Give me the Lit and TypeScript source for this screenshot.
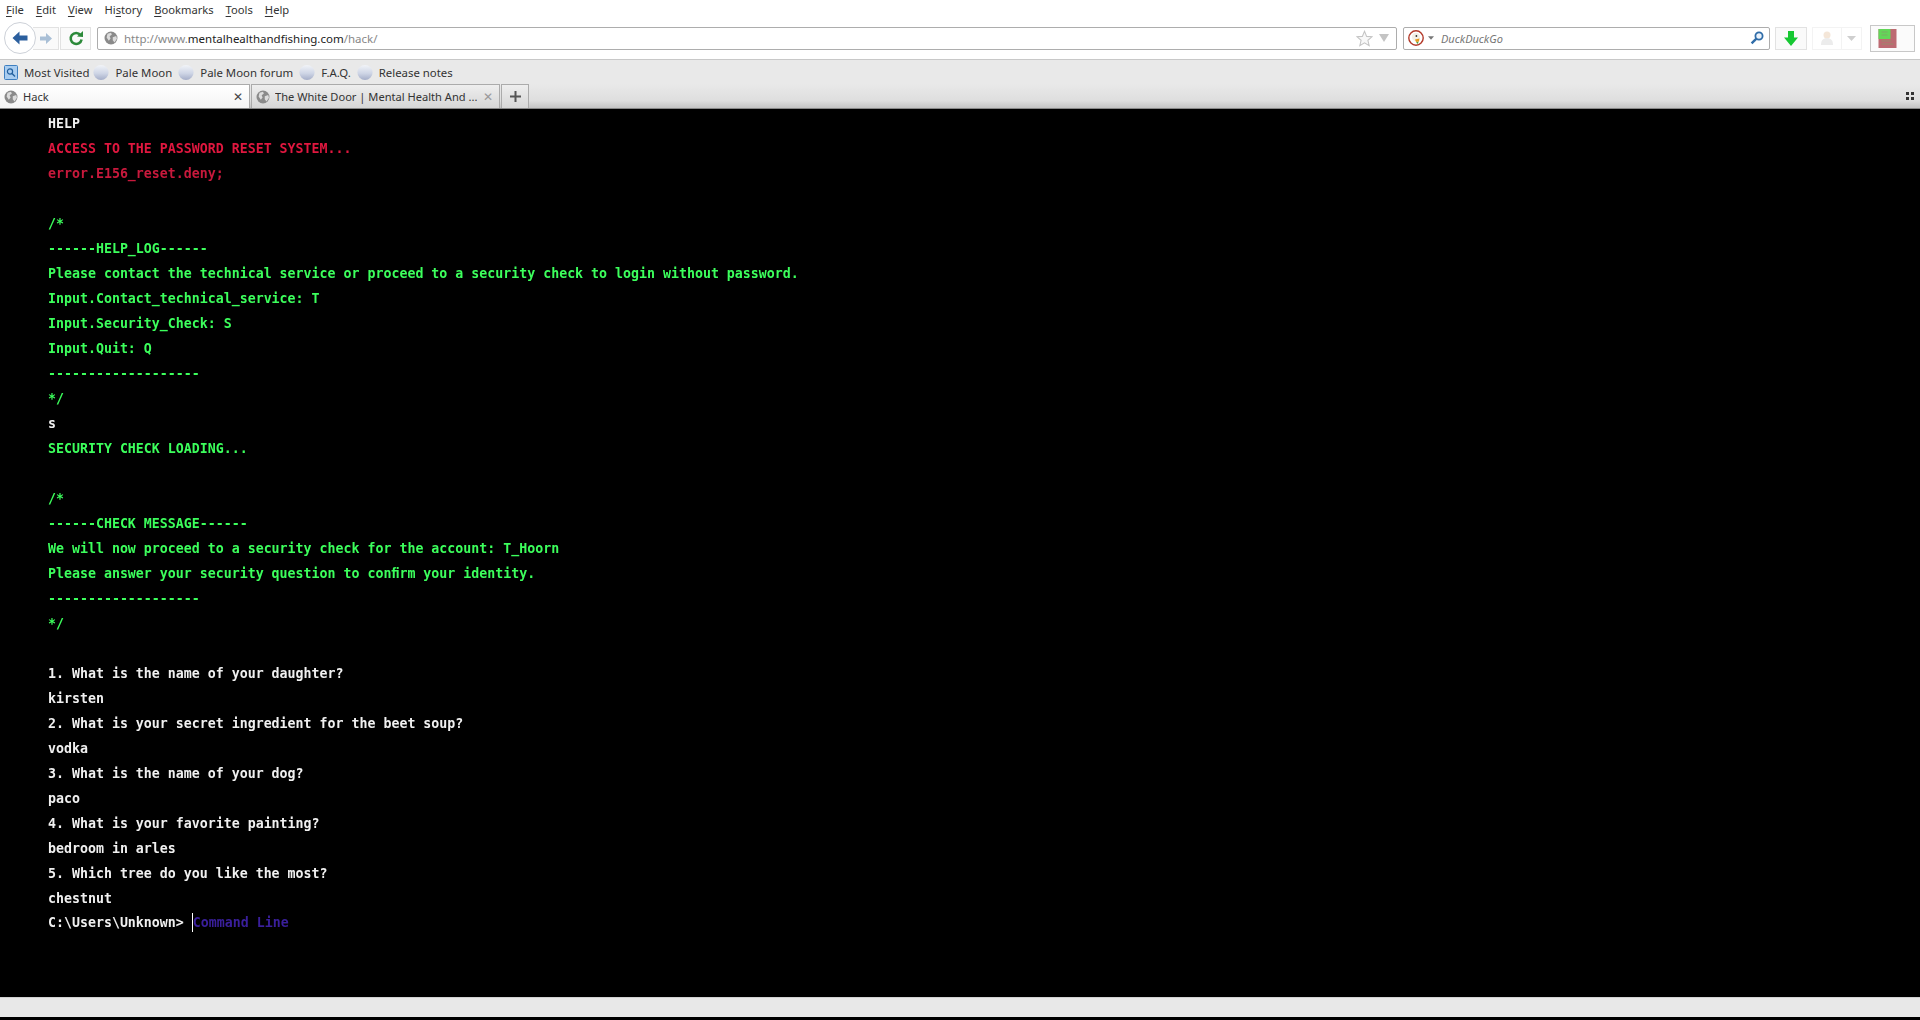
import { LitElement, html, css } from "lit";
import { customElement } from "lit/decorators.js";

const globe = (s = 16) => html`<svg class="ico" width=${s} height=${s} viewBox="0 0 16 16"><circle cx="8" cy="8" r="7.4" fill="#8a8a8a"/><path d="M4 3.2 8 2 9 4 6.5 6 7.5 8.5 5.5 11 3 7.5ZM10 7l4-1.2.8 3L12 13l-2-2.5Z" fill="#dcdcdc"/></svg>`;
const moon = html`<svg class="ico" width="16" height="17" viewBox="0 0 16 17"><defs><linearGradient id="m" x1="0" y1="0" x2="0" y2="1"><stop offset="0" stop-color="#f2f4f8"/><stop offset=".55" stop-color="#cfd6e6"/><stop offset="1" stop-color="#a4adc8"/></linearGradient></defs><circle cx="8" cy="8.5" r="7.6" fill="url(#m)"/></svg>`;

type Line = [string, string];
const L: Line[] = [
  ["w", "HELP"],
  ["r", "ACCESS TO THE PASSWORD RESET SYSTEM..."],
  ["d", "error.E156_reset.deny;"],
  ["g", ""],
  ["g", "/*"],
  ["g", "------HELP_LOG------"],
  ["g", "Please contact the technical service or proceed to a security check to login without password."],
  ["g", "Input.Contact_technical_service: T"],
  ["g", "Input.Security_Check: S"],
  ["g", "Input.Quit: Q"],
  ["g", "-------------------"],
  ["g", "*/"],
  ["w", "s"],
  ["g", "SECURITY CHECK LOADING..."],
  ["g", ""],
  ["g", "/*"],
  ["g", "------CHECK MESSAGE------"],
  ["g", "We will now proceed to a security check for the account: T_Hoorn"],
  ["g", "Please answer your security question to con\uFB01rm your identity."],
  ["g", "-------------------"],
  ["g", "*/"],
  ["g", ""],
  ["w", "1. What is the name of your daughter?"],
  ["w", "kirsten"],
  ["w", "2. What is your secret ingredient for the beet soup?"],
  ["w", "vodka"],
  ["w", "3. What is the name of your dog?"],
  ["w", "paco"],
  ["w", "4. What is your favorite painting?"],
  ["w", "bedroom in arles"],
  ["w", "5. Which tree do you like the most?"],
  ["w", "chestnut"],
];

@customElement("app-root")
export class AppRoot extends LitElement {
  static styles = css`
    :host { display: flex; flex-direction: column; width: 1920px; height: 1020px; overflow: hidden; background: #000; font-family: "Noto Sans", "Open Sans", sans-serif; font-size: 11.4px; color: #333; }
    .ico { display: block; flex: none; }
    .menu { height: 20px; box-sizing: border-box; padding: 0 0 2px 6px; background: #fff; display: flex; align-items: center; gap: 12px; color: #333; font-size: 11.2px; }
    .menu span u { text-decoration-thickness: 1px; text-underline-offset: 2px; }
    .nav { height: 40px; box-sizing: border-box; padding: 0 5px 3px 4px; background: #fff; border-bottom: 1px solid #c8c8c8; display: flex; align-items: center; }
    .back { width: 30px; height: 30px; border-radius: 50%; border: 1px solid #cdd1d8; background: #fff; display: flex; align-items: center; justify-content: center; flex: none; position: relative; z-index: 1; }
    .btn { height: 23px; border: 1px solid #e2e2e2; background: #fafafa; display: flex; align-items: center; justify-content: center; box-sizing: border-box; flex: none; }
    .fwd { width: 26px; margin-left: -3px; border-left: none; }
    .reload { width: 31px; margin-left: 1px; margin-right: 6px; }
    .field { height: 23px; box-sizing: border-box; border: 1px solid #adadad; border-radius: 2px; background: #fff; display: flex; align-items: center; }
    .url { width: 1300px; padding-left: 6px; color: #888; font-size: 11.5px; flex: none; }
    .url b { font-weight: 400; color: #222; }
    .url .t { margin-left: 6px; flex: 1; }
    .search { width: 367px; margin-left: 6px; padding: 0 5px 0 4px; flex: none; }
    .search i { margin-left: 7px; flex: 1; color: #777; font-size: 11px; }
    .dl { width: 32px; margin-left: 5px; }
    .user { width: 30px; margin-left: 5px; border-color: #f3f3f3; background: #fff; }
    .userdd { width: 20px; border-color: #f3f3f3; background: #fff; border-left: none; }
    .ext { width: 45px; height: 27px; margin-left: 8px; border: 1px solid #c8c8c8; background: #fbfbfb; box-sizing: border-box; padding-left: 7px; display: flex; align-items: center; flex: none; }
    .bm { height: 24px; background: #e9e9e9; display: flex; align-items: center; padding-left: 4px; color: #333; font-size: 11.4px; }
    .bm span { margin-left: 6px; margin-right: 6px; }
    .bm span.first { margin-right: 4px; }
    .tabs { height: 25px; display: flex; background: linear-gradient(#e9e9e9, #dedede 70%, #c4c4c4); align-items: stretch; border-bottom: 1px solid #888; box-sizing: border-box; }
    .tab { box-sizing: border-box; border: 1px solid #ababab; border-bottom: none; display: flex; align-items: center; padding: 0 5px 0 4px; gap: 5px; color: #333; flex: none; width: 249px; font-size: 11.1px; }
    .tab .n { flex: 1; white-space: nowrap; overflow: hidden; }
    .tab.on { background: linear-gradient(#fff, #f4f4f4); width: 250px; border-left: none; }
    .tab.off { margin-left: 1px; background: linear-gradient(#eee, #d6d6d6); }
    .x { font-size: 12px; line-height: 1; color: #444; width: 12px; text-align: center; }
    .off .x { color: #999; }
    .plus { width: 28px; margin-left: 1px; border: 1px solid #ababab; border-bottom: none; box-sizing: border-box; display: flex; align-items: center; justify-content: center; background: linear-gradient(#eee, #d6d6d6); flex: none; }
    .spacer { flex: 1; }
    .grip { display: grid; grid-template-columns: 3px 3px; gap: 2px; align-self: center; margin-right: 6px; }
    .grip s { display: block; width: 3px; height: 3px; background: #333; }
    .con { height: 888px; box-sizing: border-box; background: #000; padding: 2px 0 0 48px; font-family: "DejaVu Sans Mono", monospace; font-weight: 700; font-size: 13.28px; line-height: 25px; color: #eee; filter: blur(0.4px); }
    .l { height: 25px; white-space: pre; }
    .g { color: #3cff5c; }
    .w { color: #f0f0f0; }
    .r { color: #e0173f; }
    .d { color: #c8193c; }
    .prompt { display: flex; margin-top: -1px; }
    .caret { width: 1px; height: 19px; background: #fff; align-self: center; margin-left: 8px; }
    .ph { color: #3a1f9c; }
    .status { height: 20px; background: #e8e8e8; border-top: 1px solid #d0d0d0; box-sizing: border-box; }
    .end { height: 3px; background: #000; }
  `;

  render() {
    return html`
      <div class="menu">
        <span><u>F</u>ile</span><span><u>E</u>dit</span><span><u>V</u>iew</span><span>Hi<u>s</u>tory</span><span><u>B</u>ookmarks</span><span><u>T</u>ools</span><span><u>H</u>elp</span>
      </div>
      <div class="nav">
        <div class="back"><svg class="ico" width="18" height="16" viewBox="0 0 18 16"><path d="M8.5 1.5 1.5 8l7 6.5V10.5H16.5V5.5H8.5Z" fill="#2b5f9e"/></svg></div>
        <div class="btn fwd"><svg class="ico" width="14" height="13" viewBox="0 0 14 13"><path d="M7 1 13 6.5 7 12V8.5H1v-4H7Z" fill="#a9bfd6"/></svg></div>
        <div class="btn reload"><svg class="ico" width="16" height="16" viewBox="0 0 16 16"><path d="M12.5 5A5.5 5.5 0 1 0 13.6 9.5" fill="none" stroke="#2c8a3a" stroke-width="2.6"/><path d="M9 6.5 15 7V1Z" fill="#2c8a3a"/></svg></div>
        <div class="field url">
          ${globe(14)}
          <span class="t">http://www.<b>mentalhealthandfishing.com</b>/hack/</span>
          <svg class="ico" width="17" height="17" viewBox="0 0 16 16"><path d="M8 1.2 10 6l5 .4-3.8 3.3 1.2 5L8 12l-4.4 2.7 1.2-5L1 6.4 6 6Z" fill="#f8f8f8" stroke="#c4c4c4"/></svg>
          <svg class="ico" style="margin:0 7px 0 6px" width="10" height="8" viewBox="0 0 9 7"><path d="M0 0h9L4.5 7Z" fill="#c4c4c4"/></svg>
        </div>
        <div class="field search">
          <svg class="ico" width="16" height="16" viewBox="0 0 16 16"><circle cx="8" cy="8" r="7.2" fill="#fff" stroke="#b3392a" stroke-width="1.4"/><circle cx="8" cy="7" r="4" fill="#f3efe6"/><circle cx="8.4" cy="6" r=".9" fill="#333"/><path d="M7 9.5 11.5 8.5 11 11.5 8 12Z" fill="#e89a1e"/><path d="M8 12.5 10.5 11.5 10 14Z" fill="#4c9a3a"/></svg>
          <svg class="ico" style="margin-left:4px" width="6" height="4" viewBox="0 0 7 4"><path d="M0 0h7L3.5 4Z" fill="#777"/></svg>
          <i>DuckDuckGo</i>
          <svg class="ico" width="14" height="14" viewBox="0 0 14 14"><circle cx="9" cy="5" r="3.6" fill="#eaf2fb" stroke="#2f6ca8" stroke-width="1.8"/><path d="M6.4 7.6 1.6 12.4" stroke="#2f6ca8" stroke-width="2.4"/></svg>
        </div>
        <div class="btn dl"><svg class="ico" width="14" height="15" viewBox="0 0 14 15"><path d="M4 0h6v6.5h4L7 15 0 6.5h4Z" fill="#16c832"/></svg></div>
        <div class="btn user"><svg class="ico" width="14" height="16" viewBox="0 0 14 16"><circle cx="7" cy="5" r="3.5" fill="#f4e6d8"/><path d="M1 15c0-5 2.5-7 6-7s6 2 6 7Z" fill="#ececec"/></svg></div>
        <div class="btn userdd"><svg class="ico" width="9" height="5" viewBox="0 0 9 5"><path d="M0 0h9L4.5 5Z" fill="#cfcfcf"/></svg></div>
        <div class="ext"><svg class="ico" width="19" height="19" viewBox="0 0 18 19"><rect width="18" height="19" fill="#bd6a72"/><rect x="0" y="0" width="12" height="10" fill="#62d658"/><path d="M3 3h6M3 6h6M3 12h10M3 15h12" stroke="#8a9a6a" stroke-width=".7"/></svg></div>
      </div>
      <div class="bm">
        <svg class="ico" width="14" height="15" viewBox="0 0 14 15"><rect x=".5" y=".5" width="13" height="14" rx="1" fill="#a9cdf0" stroke="#3e7fc0"/><circle cx="6" cy="6.5" r="2.6" fill="none" stroke="#23609e" stroke-width="1.2"/><path d="m8 8.5 3 3" stroke="#23609e" stroke-width="1.4"/></svg>
        <span class="first">Most Visited</span>${moon}
        <span>Pale Moon</span>${moon}
        <span>Pale Moon forum</span>${moon}
        <span>F.A.Q.</span>${moon}
        <span>Release notes</span>
      </div>
      <div class="tabs">
        <div class="tab on">${globe(14)}<span class="n">Hack</span><span class="x">✕</span></div>
        <div class="tab off">${globe(14)}<span class="n">The White Door | Mental Health And ...</span><span class="x">✕</span></div>
        <div class="plus"><svg class="ico" width="11" height="11" viewBox="0 0 11 11"><path d="M4.5 0h2v4.5H11v2H6.5V11h-2V6.5H0v-2h4.5Z" fill="#555"/></svg></div>
        <div class="spacer"></div>
        <div class="grip"><s></s><s></s><s></s><s></s></div>
      </div>
      <div class="con">
        ${L.map(([c, t]) => html`<div class="l ${c}">${t}</div>`)}
        <div class="l w prompt"><span>C:\\Users\\Unknown&gt;</span><i class="caret"></i><span class="ph">Command Line</span></div>
      </div>
      <div class="status"></div>
      <div class="end"></div>
    `;
  }
}
